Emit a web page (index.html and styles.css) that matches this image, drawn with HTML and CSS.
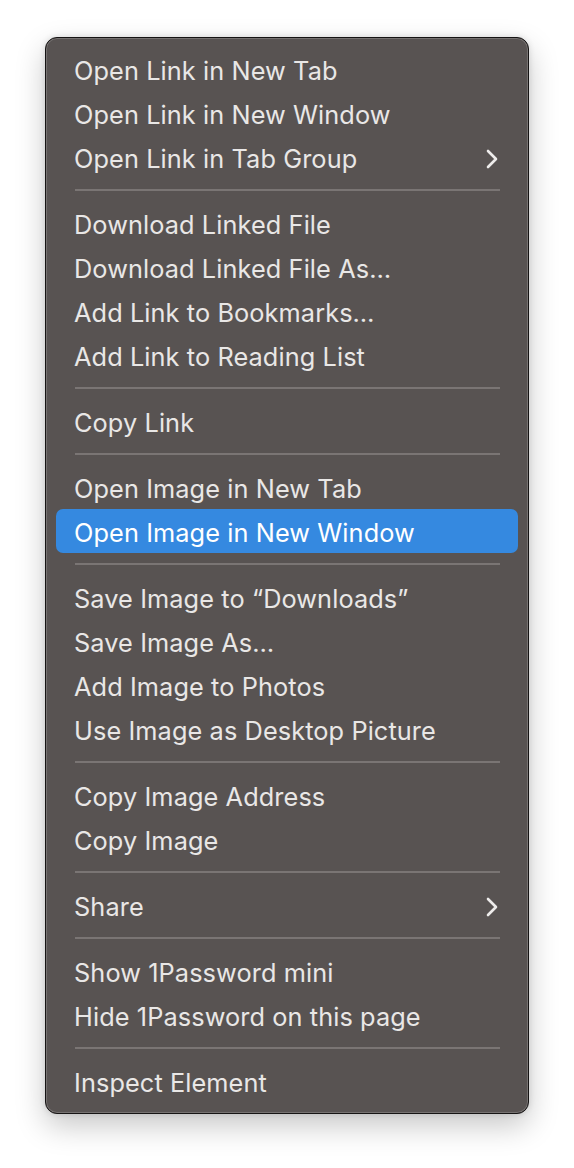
FILE: index.html
```html
<!DOCTYPE html>
<html>
<head>
<meta charset="utf-8">
<link rel="stylesheet" href="styles.css">
</head>
<body>
<div class="menu">
  <div class="item">Open Link in New Tab</div>
  <div class="item">Open Link in New Window</div>
  <div class="item sub">Open Link in Tab Group<svg class="chev" viewBox="0 0 12 20"><path d="M2 2 L10 10 L2 18"/></svg></div>
  <div class="sep"></div>
  <div class="item">Download Linked File</div>
  <div class="item">Download Linked File As…</div>
  <div class="item">Add Link to Bookmarks…</div>
  <div class="item">Add Link to Reading List</div>
  <div class="sep"></div>
  <div class="item">Copy Link</div>
  <div class="sep"></div>
  <div class="item">Open Image in New Tab</div>
  <div class="item active">Open Image in New Window</div>
  <div class="sep"></div>
  <div class="item">Save Image to “Downloads”</div>
  <div class="item">Save Image As…</div>
  <div class="item">Add Image to Photos</div>
  <div class="item">Use Image as Desktop Picture</div>
  <div class="sep"></div>
  <div class="item">Copy Image Address</div>
  <div class="item">Copy Image</div>
  <div class="sep"></div>
  <div class="item sub">Share<svg class="chev" viewBox="0 0 12 20"><path d="M2 2 L10 10 L2 18"/></svg></div>
  <div class="sep"></div>
  <div class="item">Show 1Password mini</div>
  <div class="item">Hide 1Password on this page</div>
  <div class="sep"></div>
  <div class="item">Inspect Element</div>
</div>
</body>
</html>
```

FILE: styles.css
```css
html, body {
  margin: 0;
  padding: 0;
  background: #ffffff;
}
body {
  box-sizing: border-box;
  min-height: 1168px;
  padding: 37px 0 0 45px;
  font-family: Inter, "Liberation Sans", sans-serif;
}
.menu {
  box-sizing: border-box;
  width: 484px;
  height: 1077px;
  background: #585352;
  border: 1px solid #161414;
  border-radius: 12px;
  box-shadow: inset 0 0 0 1px rgba(255,255,255,0.18), 0 12px 30px rgba(0,0,0,0.22), 0 0 6px rgba(0,0,0,0.12);
  padding: 9px 10px 10px 10px;
  display: flex;
  flex-direction: column;
}
.item {
  height: 44px;
  display: flex;
  align-items: center;
  justify-content: space-between;
  padding: 3px 20px 0 18px;
  box-sizing: border-box;
  border-radius: 7px;
  color: #e9e7e6;
  font-size: 25.3px;
  letter-spacing: 0.1px;
  white-space: nowrap;
}
.item.active {
  background: #3589e0;
  color: #ffffff;
}
.sep {
  height: 22px;
  display: flex;
  align-items: center;
  padding: 0 18px 0 19px;
}
.sep::before {
  content: "";
  flex: 1;
  height: 2px;
  background: #7a7574;
}
.chev {
  width: 12px;
  height: 20px;
  fill: none;
  stroke: #eeeceb;
  stroke-width: 2.6;
  stroke-linecap: round;
  stroke-linejoin: round;
}
```
